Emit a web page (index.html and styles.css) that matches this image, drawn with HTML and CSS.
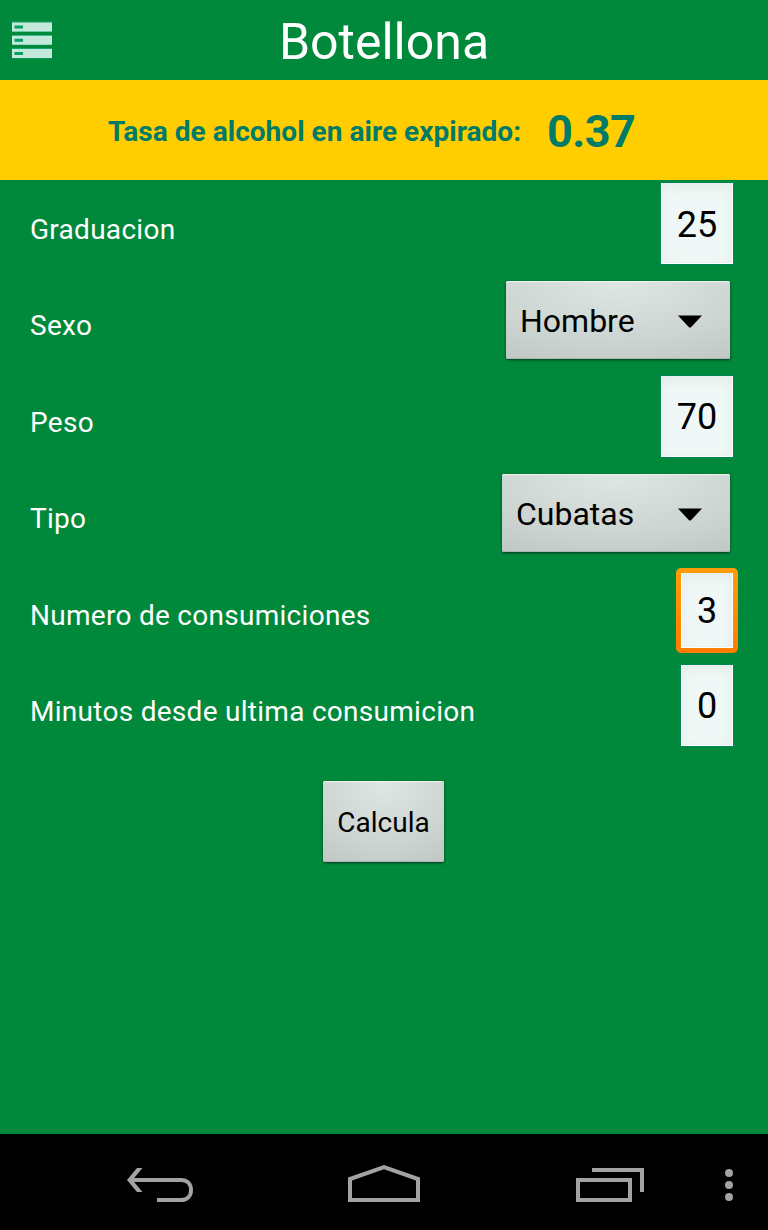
FILE: index.html
```html
<!DOCTYPE html>
<html lang="es">
<head>
  <meta charset="UTF-8" />
  <title>Botellona</title>
  <link rel="stylesheet" href="styles.css">
</head>
<body>
  <header>
    <button class="menu-button" type="button" aria-label="Menú">
      <svg width="40" height="38" viewBox="0 0 40 38">
        <path stroke="#10a878" d="M0 1h40M0 10.500h40M0 14.500h40M0 23.500h40M0 27.500h40M0 37h40" />
        <path fill="#c4e9da" d="M0 1.500h40v9H0zM0 14.700h40v9H0zM0 27.900h40v9H0z" />
        <path fill="#00a064" d="M2.500 4.500h8.500v3H2.500zM2.500 17.700h8.500v3H2.500zM2.500 30.900h8.500v3H2.500z" />
      </svg>
    </button>
    <h1 class="title">Botellona</h1>
  </header>

  <section class="result">
    <span class="result-label">Tasa de alcohol en aire expirado:</span>
    <span class="result-value">0.37</span>
  </section>

  <main>
    <form class="form">
      <div class="row">
        <label for="graduacion">Graduacion</label>
        <input class="field" id="graduacion" type="text" value="25" />
      </div>
      <div class="row">
        <label>Sexo</label>
        <button class="spinner" type="button">
          <span class="spinner-text">Hombre</span>
          <svg width="24" height="13" viewBox="0 0 24 13"><path d="M0 .5h24L13 12.200q-1 .8-2 0z" /></svg>
        </button>
      </div>
      <div class="row">
        <label for="peso">Peso</label>
        <input class="field" id="peso" type="text" value="70" />
      </div>
      <div class="row">
        <label>Tipo</label>
        <button class="spinner wide" type="button">
          <span class="spinner-text">Cubatas</span>
          <svg width="24" height="13" viewBox="0 0 24 13"><path d="M0 .5h24L13 12.200q-1 .8-2 0z" /></svg>
        </button>
      </div>
      <div class="row">
        <label for="numero">Numero de consumiciones</label>
        <div class="focus-ring">
          <input class="field small" id="numero" type="text" value="3" />
        </div>
      </div>
      <div class="row">
        <label for="minutos">Minutos desde ultima consumicion</label>
        <input class="field small" id="minutos" type="text" value="0" />
      </div>
      <button class="calcula" type="button">Calcula</button>
    </form>
  </main>

  <nav class="navbar">
    <svg class="nav-back" width="68" height="36" viewBox="0 0 68 36">
      <path fill="none" stroke="#a3a3a3" stroke-width="4" d="M4 13h50c6 0 10 4 10 10s-4 10-10 10H30" />
      <path fill="#a3a3a3" d="M10 1h5.500L5.500 13l10 12H10L0 13z" />
    </svg>
    <svg class="nav-home" width="72" height="40" viewBox="0 0 72 40" fill="none" stroke="#a3a3a3" stroke-width="4">
      <path d="M2 37V16L36 4l34 12v21z" />
    </svg>
    <svg class="nav-recent" width="68" height="36" viewBox="0 0 68 36" fill="none" stroke="#a3a3a3" stroke-width="4">
      <path d="M2 13h52v20H2zM16 3h50v22" />
    </svg>
    <svg class="nav-more" width="8" height="34" viewBox="0 0 8 34" fill="#a3a3a3">
      <circle cx="4" cy="5" r="4" />
      <circle cx="4" cy="17" r="4" />
      <circle cx="4" cy="29" r="4" />
    </svg>
  </nav>
</body>
</html>
```
FILE: styles.css
```css
* {
  box-sizing: border-box;
}

body {
  margin: 0;
  height: 1230px;
  display: flex;
  flex-direction: column;
  background-color: #00893b;
  font-family: Roboto, sans-serif;
  color: #fff;
  overflow: hidden;
}

button, input {
  font-family: inherit;
  border: none;
  padding: 0;
  margin: 0;
  color: #000;
}

svg {
  display: block;
}

header {
  height: 80px;
  display: flex;
  align-items: center;
  padding: 0 12px;
}

.menu-button {
  width: 40px;
  background: none;
}

.title {
  flex: 1;
  margin: 4px 40px 0 0;
  text-align: center;
  font-size: 50px;
  font-weight: 400;
  line-height: 58px;
}

.result {
  height: 100px;
  display: flex;
  align-items: center;
  padding: 3px 0 0 108px;
  background-color: #ffcd00;
  color: #007b68;
  font-weight: 700;
  white-space: nowrap;
}

.result-label {
  width: 439px;
  font-size: 28px;
  letter-spacing: 0.03px;
}

.result-value {
  font-size: 45px;
  letter-spacing: -0.6px;
}

main {
  flex: 1;
}

.form {
  display: flex;
  flex-direction: column;
  padding: 0 35px 0 30px;
}

.row {
  height: 96.4px;
  display: flex;
  justify-content: space-between;
  align-items: flex-start;
}

.row label {
  font-size: 28px;
  line-height: 32px;
  margin-top: 34px;
  letter-spacing: 0.28px;
}

.field {
  width: 72px;
  height: 81px;
  margin-top: 3px;
  padding-top: 3px;
  background-color: #eff8f6;
  border: 1px solid #fff;
  border-top: none;
  box-shadow: inset 0 4px 12px #e2ebe8, 0 0 1px 1px #008754;
  text-align: center;
  font-size: 36px;
}

.small {
  width: 52px;
}

.spinner {
  width: 224px;
  height: 78px;
  margin: 5px 3px 0 0;
  padding: 2px 28px 0 14px;
  display: flex;
  align-items: center;
  justify-content: space-between;
}

.spinner, .calcula {
  border-radius: 2px;
  background: radial-gradient(ellipse 90% 115% at 50% 0, #dfe7e4, #cdd5d2 65%, #c1c9c6);
  box-shadow: inset 0 1px 1px #edf3f1, inset 0 -1px 1px #adb5b2, 0 1px 3px #00391f;
}

.wide {
  width: 228px;
}

.spinner-text {
  font-size: 32px;
}

.focus-ring {
  margin: 2px -5px 0 0;
  padding: 5px;
  border-radius: 5px;
  background: linear-gradient(#ff9c0a, #ff7d00);
}

.focus-ring .field {
  display: block;
  height: 75px;
  margin: 0;
  box-shadow: inset 0 4px 12px #e2ebe8;
}

.calcula {
  width: 121px;
  height: 81px;
  margin: 23px 0 0 293px;
  padding-top: 1px;
  font-size: 28px;
}

.navbar {
  height: 96px;
  display: flex;
  align-items: center;
  padding: 6px 35px 0 127px;
  background-color: #000;
}

.nav-home {
  margin: -4px 0 0 153px;
}

.nav-recent {
  margin-left: 156px;
}

.nav-more {
  margin-left: auto;
}
```
